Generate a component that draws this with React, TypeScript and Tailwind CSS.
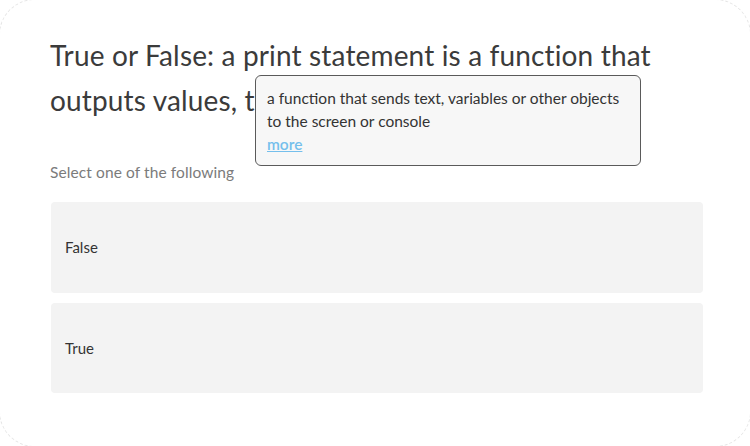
import React from "react";

export default function App() {
  return (
    <div className="w-[750px] h-[446px] overflow-hidden bg-white" style={{ fontFamily: "Lato, 'Open Sans', sans-serif" }}>
      <div className="-m-px w-[752px] h-[448px] rounded-[36px] border border-dashed border-[#e6e6e6] bg-white">
        <div className="relative pl-[51px] pr-[47px] pt-[33px]">
          <h1 className="-ml-px text-[28px] leading-[45px] text-[#3b3b3b] font-normal tracking-[0.15px]">
            True or False: a print statement is a function that outputs values, that
          </h1>
          <p className="-ml-px mt-[39px] text-[15.5px] leading-[20px] text-[#7b7b7b] tracking-[0.1px]">Select one of the following</p>
          <div className="mt-[20px] flex flex-col gap-[10px]">
            <div className="h-[91px] rounded-[4px] bg-[#f3f3f3] flex items-center pl-[14px] text-[15px] text-[#333]">False</div>
            <div className="h-[90px] rounded-[4px] bg-[#f3f3f3] flex items-center pl-[14px] text-[15px] text-[#333]">True</div>
          </div>
          <div className="absolute left-[255px] top-[75px] w-[386px] h-[91px] rounded-[6px] border border-[#5a5a5a] bg-[#f7f7f7] pl-[11px] pt-[11px] text-[15.5px] leading-[23px] text-[#333] whitespace-nowrap">
            <div>a function that sends text, variables or other objects<br />to the screen or console</div>
            <a className="font-semibold text-[#75bfec] underline">more</a>
          </div>
        </div>
      </div>
    </div>
  );
}
